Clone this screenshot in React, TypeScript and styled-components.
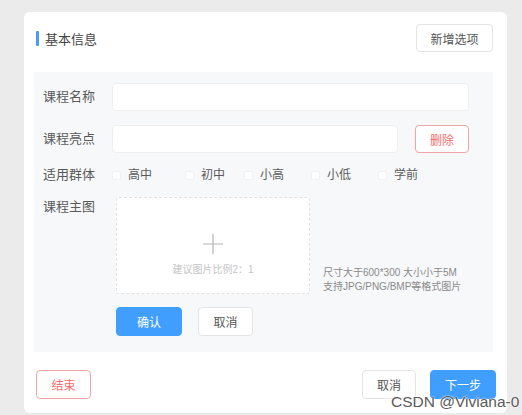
import React from 'react';
import styled, { createGlobalStyle } from 'styled-components';

const GlobalStyle = createGlobalStyle`
  html, body {
    margin: 0;
    padding: 0;
    background: #ebebeb;
    font-family: "Liberation Sans", "Noto Sans CJK SC", sans-serif;
  }
  * { box-sizing: border-box; }
`;

const Page = styled.div`
  position: relative;
  width: 522px;
  height: 415px;
  padding: 12px 15px 0 24px;
  overflow: hidden;
`;

const Card = styled.div`
  width: 483px;
  height: 401px;
  background: #fff;
  border-radius: 6px;
  display: flex;
  flex-direction: column;
`;

const Header = styled.div`
  display: flex;
  justify-content: space-between;
  align-items: center;
  height: 28px;
  margin-top: 12px;
  padding: 0 14px 0 12px;
`;

const Title = styled.div`
  display: flex;
  align-items: center;
  gap: 6px;
  font-size: 13px;
  color: #444;

  &::before {
    content: '';
    width: 3px;
    height: 15px;
    background: #4a9bf0;
    border-radius: 1px;
  }
`;

const Button = styled.button<{ $variant?: 'default' | 'primary' | 'danger'; $w: number }>`
  width: ${({ $w }) => $w}px;
  height: 29px;
  border-radius: 4px;
  font-family: inherit;
  font-size: 12px;
  padding: 0;
  cursor: pointer;
  background: ${({ $variant }) => ($variant === 'primary' ? '#409eff' : '#fff')};
  color: ${({ $variant }) =>
    $variant === 'primary' ? '#fff' : $variant === 'danger' ? '#f56c6c' : '#555'};
  border: 1px solid
    ${({ $variant }) =>
      $variant === 'primary' ? '#409eff' : $variant === 'danger' ? '#f3a5a5' : '#e4e4e4'};
`;

const Panel = styled.div`
  margin: 20px 14px 0 10px;
  height: 280px;
  background: #f7f8fa;
  padding: 11px 24px 16px 9px;
  display: flex;
  flex-direction: column;
  gap: 14px;
`;

const Row = styled.div<{ $top?: boolean }>`
  display: flex;
  align-items: ${({ $top }) => ($top ? 'flex-start' : 'center')};
`;

const Label = styled.div<{ $offset?: number }>`
  width: 69px;
  flex: none;
  font-size: 13px;
  line-height: 16px;
  color: #5a5a5a;
  padding-top: ${({ $offset }) => $offset ?? 0}px;
`;

const Input = styled.input`
  height: 28px;
  flex: 1;
  min-width: 0;
  border: 1px solid #efefef;
  border-radius: 4px;
  background: #fff;
  outline: none;
  padding: 0 10px;
`;

const Spacer = styled.div<{ $w: number }>`
  width: ${({ $w }) => $w}px;
  flex: none;
`;

const Options = styled.div`
  display: flex;
  align-items: center;
  height: 16px;
`;

const Option = styled.label<{ $w?: number }>`
  display: flex;
  align-items: center;
  gap: 7px;
  width: ${({ $w }) => ($w ? `${$w}px` : 'auto')};
  font-size: 12px;
  line-height: 16px;
  color: #5a5a5a;
`;

const Box = styled.span`
  width: 9px;
  height: 9px;
  background: #fff;
  border: 1px solid #f1f1f1;
  border-radius: 2px;
`;

const Upload = styled.div`
  display: flex;
  align-items: flex-end;
  gap: 13px;
  margin-left: 4px;
`;

const Drop = styled.div`
  width: 194px;
  height: 97px;
  background: #fff;
  border: 1px dashed #e2e2e2;
  border-radius: 3px;
  display: flex;
  flex-direction: column;
  align-items: center;
  justify-content: flex-end;
  padding-bottom: 17px;
  gap: 7px;
`;

const DropHint = styled.div`
  font-size: 10px;
  color: #c4c4c4;
`;

const Hint = styled.div`
  font-size: 10px;
  line-height: 14px;
  color: #8a8a8a;
`;

const Actions = styled.div`
  display: flex;
  gap: 16px;
  margin-left: 4px;
  margin-top: -1px;
`;

const Footer = styled.div`
  display: flex;
  align-items: center;
  margin-top: 18px;
  padding: 0 11px 0 12px;
`;

const FooterRight = styled.div`
  margin-left: auto;
  display: flex;
  gap: 14px;
`;

const Watermark = styled.div`
  position: absolute;
  left: 391px;
  top: 393px;
  font-size: 15.5px;
  color: #5a5a5a;
  font-family: "Liberation Sans", sans-serif;
  text-shadow: 0 0 2px #fff, 0 0 1px #fff;
  white-space: nowrap;
`;

const groups = [
  { name: '高中', w: 73 },
  { name: '初中', w: 59 },
  { name: '小高', w: 67 },
  { name: '小低', w: 67 },
  { name: '学前' },
];

export default function App() {
  return (
    <Page>
      <GlobalStyle />
      <Card>
        <Header>
          <Title>基本信息</Title>
          <Button $w={77} style={{ height: 28 }}>新增选项</Button>
        </Header>

        <Panel>
          <Row>
            <Label>课程名称</Label>
            <Input />
          </Row>
          <Row>
            <Label>课程亮点</Label>
            <Input />
            <Spacer $w={17} />
            <Button $variant="danger" $w={54} style={{ height: 28 }}>删除</Button>
          </Row>
          <Row>
            <Label>适用群体</Label>
            <Options>
              {groups.map((g) => (
                <Option key={g.name} $w={g.w}>
                  <Box />
                  {g.name}
                </Option>
              ))}
            </Options>
          </Row>
          <Row $top>
            <Label $offset={2}>课程主图</Label>
            <div>
              <Upload>
                <Drop>
                  <svg width="20" height="20" viewBox="0 0 20 20">
                    <path d="M10 0v20M0 10h20" stroke="#b5b5b5" strokeWidth="1.2" fill="none" />
                  </svg>
                  <DropHint>建议图片比例2：1</DropHint>
                </Drop>
                <Hint>
                  尺寸大于600*300 大小小于5M
                  <br />
                  支持JPG/PNG/BMP等格式图片
                </Hint>
              </Upload>
            </div>
          </Row>
          <Row>
            <Spacer $w={69} />
            <Actions>
              <Button $variant="primary" $w={66}>确认</Button>
              <Button $w={55}>取消</Button>
            </Actions>
          </Row>
        </Panel>

        <Footer>
          <Button $variant="danger" $w={55}>结束</Button>
          <FooterRight>
            <Button $w={54}>取消</Button>
            <Button $variant="primary" $w={66}>下一步</Button>
          </FooterRight>
        </Footer>
      </Card>
      <Watermark>CSDN @Viviana-0</Watermark>
    </Page>
  );
}
